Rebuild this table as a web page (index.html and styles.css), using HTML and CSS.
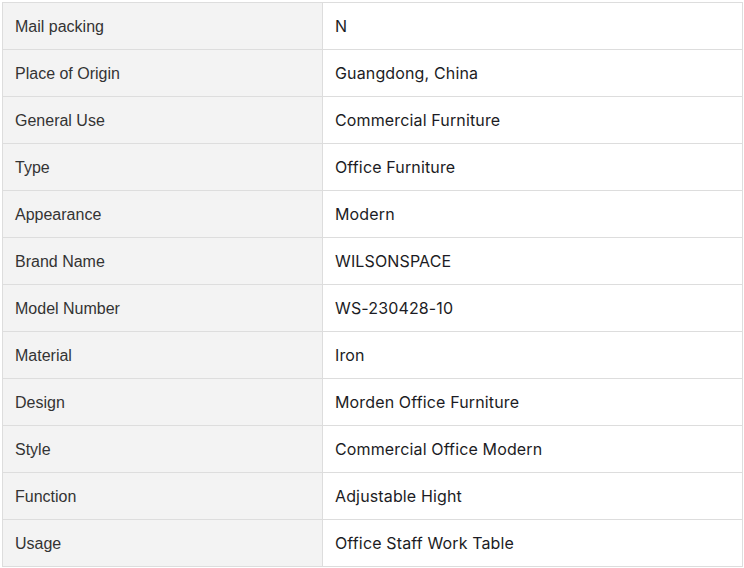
FILE: index.html
```html
<!DOCTYPE html>
<html>
<head>
<meta charset="utf-8">
<link rel="stylesheet" href="styles.css">
</head>
<body>
<table class="spec">
<tbody>
<tr><td class="k">Mail packing</td><td class="v">N</td></tr>
<tr><td class="k">Place of Origin</td><td class="v">Guangdong, China</td></tr>
<tr><td class="k">General Use</td><td class="v">Commercial Furniture</td></tr>
<tr><td class="k">Type</td><td class="v">Office Furniture</td></tr>
<tr><td class="k">Appearance</td><td class="v">Modern</td></tr>
<tr><td class="k">Brand Name</td><td class="v">WILSONSPACE</td></tr>
<tr><td class="k">Model Number</td><td class="v">WS-230428-10</td></tr>
<tr><td class="k">Material</td><td class="v">Iron</td></tr>
<tr><td class="k">Design</td><td class="v">Morden Office Furniture</td></tr>
<tr><td class="k">Style</td><td class="v">Commercial Office Modern</td></tr>
<tr><td class="k">Function</td><td class="v">Adjustable Hight</td></tr>
<tr><td class="k">Usage</td><td class="v">Office Staff Work Table</td></tr>
</tbody>
</table>
</body>
</html>
```
FILE: styles.css
```css
html, body {
  margin: 0;
  background: #fff;
}
body {
  padding: 2px;
  font-family: Inter, "Liberation Sans", sans-serif;
}
.spec {
  border-collapse: collapse;
  width: 741px;
  table-layout: fixed;
}
.spec td {
  border: 1px solid #dddddd;
  height: 47px;
  padding: 0 12px;
  box-sizing: border-box;
  font-size: 16px;
  vertical-align: middle;
}
.spec .k {
  width: 320px;
  background: #f3f3f3;
  color: #333;
  font-family: "Liberation Sans", Arial, sans-serif;
  padding-top: 1px;
}
.spec .v {
  background: #fff;
  color: #1c1c24;
  font-weight: 400;
  letter-spacing: 0.14px;
}
```
